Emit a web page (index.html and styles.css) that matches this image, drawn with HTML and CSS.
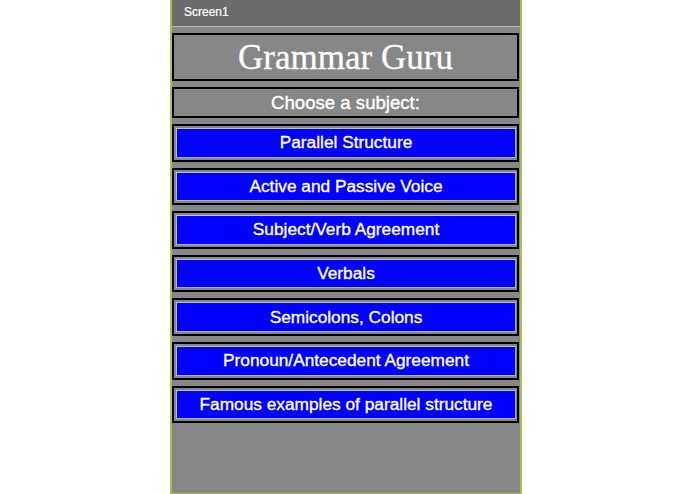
FILE: index.html
```html
<!DOCTYPE html>
<html>
<head>
<meta charset="utf-8">
<title>Grammar Guru</title>
<link rel="stylesheet" href="styles.css">
</head>
<body>
<div class="phone">
  <div class="titlebar">Screen1</div>
  <div class="content">
    <div class="box title-box">Grammar Guru</div>
    <div class="box choose-box">Choose a subject:</div>
    <div class="btn-wrap"><div class="btn">Parallel Structure</div></div>
    <div class="btn-wrap"><div class="btn">Active and Passive Voice</div></div>
    <div class="btn-wrap"><div class="btn">Subject/Verb Agreement</div></div>
    <div class="btn-wrap"><div class="btn">Verbals</div></div>
    <div class="btn-wrap"><div class="btn">Semicolons, Colons</div></div>
    <div class="btn-wrap"><div class="btn">Pronoun/Antecedent Agreement</div></div>
    <div class="btn-wrap"><div class="btn">Famous examples of parallel structure</div></div>
  </div>
</div>
</body>
</html>
```

FILE: styles.css
```css
html, body {
  margin: 0;
  padding: 0;
  background: #ffffff;
}

.phone {
  margin-left: 170px;
  width: 348px;
  height: 493px;
  border-left: 2px solid #a6c24a;
  border-right: 2px solid #a6c24a;
  border-bottom: 1px solid #a6c24a;
  background: #878787;
  display: flex;
  flex-direction: column;
  font-family: "Liberation Sans", Arial, sans-serif;
  color: #ffffff;
}

.titlebar {
  height: 26px;
  background: #6c6c6c;
  border-bottom: 1px solid #b5b5b5;
  font-size: 12px;
  line-height: 25px;
  padding-left: 12px;
  box-sizing: content-box;
  -webkit-text-stroke: 0.2px #ffffff;
}

.content {
  display: flex;
  flex-direction: column;
  gap: 6px;
  padding: 6px 1px 0 0;
}

.box {
  border: 2px solid #000000;
  display: flex;
  align-items: center;
  justify-content: center;
  box-sizing: border-box;
}

.title-box {
  height: 48px;
  font-family: "Liberation Serif", "Times New Roman", serif;
  font-size: 35px;
  padding-top: 1px;
  -webkit-text-stroke: 0.3px #ffffff;
}

.choose-box {
  height: 31px;
  font-size: 18.6px;
  -webkit-text-stroke: 0.35px #ffffff;
}

.btn-wrap {
  height: 37.6px;
  border: 2px solid #000000;
  padding: 2px 1px 2px 2px;
  box-sizing: border-box;
  display: flex;
}

.btn {
  flex: 1;
  background: #0000ff;
  border: 1px solid #c2c2c2;
  border-right-color: #a8a8a8;
  border-bottom-color: #b0b0b0;
  display: flex;
  align-items: center;
  justify-content: center;
  font-size: 17.3px;
  white-space: nowrap;
  -webkit-text-stroke: 0.35px #ffffff;
}
```
